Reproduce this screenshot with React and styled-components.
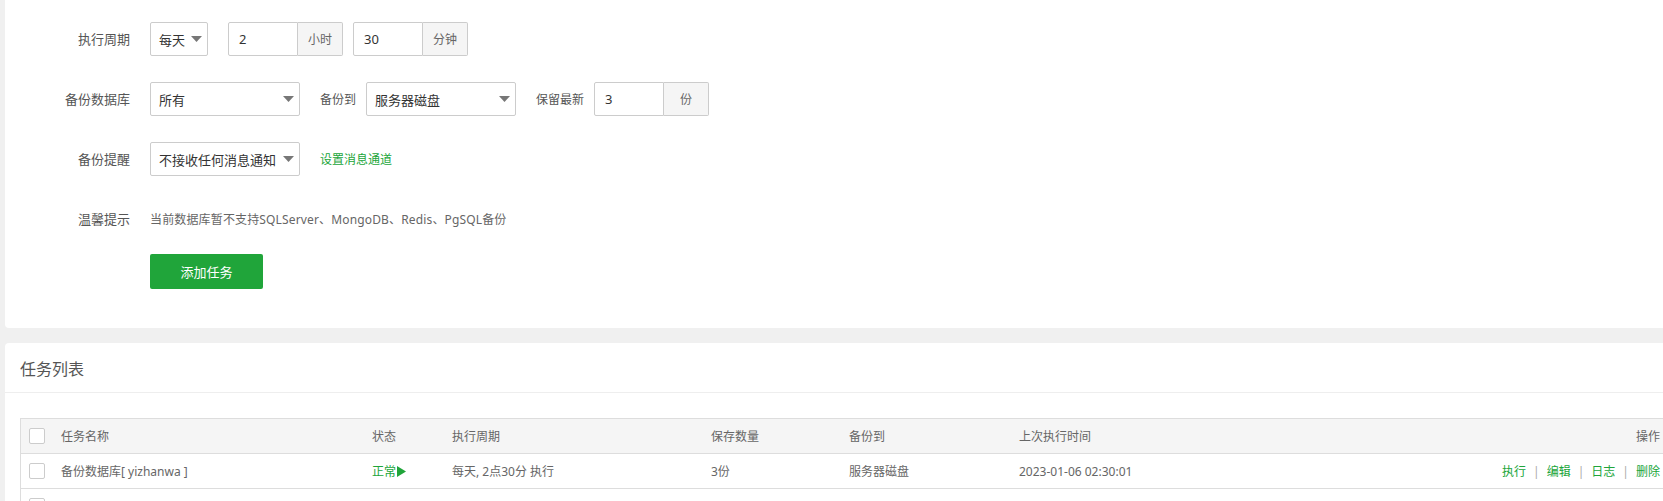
import React from "react";
import styled, { createGlobalStyle } from "styled-components";

const GlobalStyle = createGlobalStyle`
  html, body {
    margin: 0;
    padding: 0;
    overflow: hidden;
    background: #f0f0f0;
  }
  body {
    font-family: "Noto Sans", "Noto Sans CJK SC", sans-serif;
    color: #555;
  }
  * {
    box-sizing: border-box;
  }
`;

const Page = styled.div`
  width: 1700px;
  padding-left: 5px;
  display: flex;
  flex-direction: column;
  gap: 15px;
`;

const Panel = styled.div`
  background: #fff;
  border-radius: ${(p) => (p.$top ? "0 0 4px 4px" : "4px")};
`;

const Form = styled.div`
  padding: 22px 0 39px 0;
  display: flex;
  flex-direction: column;
  gap: 26px;
`;

const Line = styled.div`
  display: flex;
  align-items: center;
  height: 34px;
`;

const Label = styled.span`
  width: 145px;
  padding-right: 20px;
  text-align: right;
  font-size: 13px;
  color: #555;
  line-height: 34px;
`;

const InlineLabel = styled.span`
  margin: 0 10px 0 20px;
  font-size: 12px;
  color: #555;
`;

const Select = styled.div`
  width: ${(p) => p.$w}px;
  height: 34px;
  border: 1px solid #ccc;
  border-radius: 2px;
  display: flex;
  align-items: center;
  justify-content: space-between;
  padding: 0 5px 0 8px;
  font-size: 13px;
  color: #333;
  margin-right: ${(p) => p.$mr || 0}px;
`;

const Caret = () => (
  <svg width="11" height="6" viewBox="0 0 11 6">
    <path d="M0 0 L11 0 L5.5 6 Z" fill="#777" />
  </svg>
);

const Group = styled.div`
  display: flex;
  height: 34px;
  margin-right: 10px;
`;

const Input = styled.div`
  width: 70px;
  border: 1px solid #ccc;
  border-radius: 2px 0 0 2px;
  padding-left: 10px;
  display: flex;
  align-items: center;
  font-size: 13px;
  color: #333;
`;

const Addon = styled.div`
  width: 45px;
  border: 1px solid #ccc;
  border-left: none;
  border-radius: 0 2px 2px 0;
  background: #f5f5f5;
  display: flex;
  align-items: center;
  justify-content: center;
  font-size: 12px;
  color: #666;
`;

const Link = styled.a`
  margin-left: 20px;
  font-size: 12px;
  color: #20a53a;
  text-decoration: none;
`;

const Tip = styled.span`
  font-size: 12px;
  color: #666;
  letter-spacing: 0.15px;
`;

const ButtonLine = styled.div`
  padding-left: 145px;
  margin-top: -8px;
`;

const Button = styled.button`
  width: 113px;
  height: 35px;
  border: none;
  border-radius: 2px;
  background: #20a53a;
  color: #fff;
  font-family: inherit;
  font-size: 13px;
`;

const Title = styled.div`
  height: 50px;
  border-bottom: 1px solid #eee;
  padding-left: 15px;
  display: flex;
  align-items: center;
  font-size: 16px;
  color: #555;
`;

const Body = styled.div`
  padding: 25px 15px 0 15px;
`;

const Table = styled.div`
  width: 1651px;
  border: 1px solid #ddd;
  border-bottom: none;
`;

const Row = styled.div`
  display: grid;
  grid-template-columns: 32px 311px 80px 259px 138px 170px 400px 1fr;
  height: 35px;
  border-bottom: 1px solid #ddd;
  background: ${(p) => (p.$head ? "#f5f5f5" : "#fff")};
  font-size: 12px;
  color: #666;
`;

const Cell = styled.div`
  display: flex;
  align-items: center;
  padding-left: 8px;
  justify-content: ${(p) => (p.$right ? "flex-end" : "flex-start")};
  padding-right: ${(p) => (p.$right ? "10px" : "0")};
  color: ${(p) => p.$color || "inherit"};
  white-space: nowrap;
`;

const Check = styled.span`
  width: 16px;
  height: 16px;
  border: 1px solid #ccc;
  border-radius: 2px;
  background: #fff;
`;

const Op = styled.a`
  color: #20a53a;
  text-decoration: none;
`;

const Sep = styled.span`
  margin: 0 7px;
  color: #aaa;
`;

const Play = () => (
  <svg width="9" height="11" viewBox="0 0 9 11" style={{ marginLeft: 1 }}>
    <path d="M0 0 L9 5.5 L0 11 Z" fill="#20a53a" />
  </svg>
);

const tasks = [
  {
    name: "备份数据库[ yizhanwa ]",
    cycle: "每天, 2点30分 执行",
    keep: "3份",
    to: "服务器磁盘",
    last: "2023-01-06 02:30:01",
  },
];

export default function App() {
  return (
    <>
      <GlobalStyle />
      <Page>
        <Panel $top>
          <Form>
            <Line>
              <Label>执行周期</Label>
              <Select $w={58} $mr={20}>
                每天 <Caret />
              </Select>
              <Group>
                <Input>2</Input>
                <Addon>小时</Addon>
              </Group>
              <Group>
                <Input>30</Input>
                <Addon>分钟</Addon>
              </Group>
            </Line>
            <Line>
              <Label>备份数据库</Label>
              <Select $w={150}>
                所有 <Caret />
              </Select>
              <InlineLabel>备份到</InlineLabel>
              <Select $w={150}>
                服务器磁盘 <Caret />
              </Select>
              <InlineLabel>保留最新</InlineLabel>
              <Group>
                <Input>3</Input>
                <Addon>份</Addon>
              </Group>
            </Line>
            <Line>
              <Label>备份提醒</Label>
              <Select $w={150}>
                不接收任何消息通知 <Caret />
              </Select>
              <Link>设置消息通道</Link>
            </Line>
            <Line>
              <Label>温馨提示</Label>
              <Tip>当前数据库暂不支持SQLServer、MongoDB、Redis、PgSQL备份</Tip>
            </Line>
            <ButtonLine>
              <Button>添加任务</Button>
            </ButtonLine>
          </Form>
        </Panel>
        <Panel>
          <Title>任务列表</Title>
          <Body>
            <Table>
              <Row $head>
                <Cell>
                  <Check />
                </Cell>
                <Cell>任务名称</Cell>
                <Cell>状态</Cell>
                <Cell>执行周期</Cell>
                <Cell>保存数量</Cell>
                <Cell>备份到</Cell>
                <Cell>上次执行时间</Cell>
                <Cell $right>操作</Cell>
              </Row>
              {tasks.map((t, i) => (
                <Row key={i}>
                  <Cell>
                    <Check />
                  </Cell>
                  <Cell>{t.name}</Cell>
                  <Cell $color="#20a53a">
                    正常
                    <Play />
                  </Cell>
                  <Cell>{t.cycle}</Cell>
                  <Cell>{t.keep}</Cell>
                  <Cell>{t.to}</Cell>
                  <Cell>{t.last}</Cell>
                  <Cell $right>
                    <Op>执行</Op>
                    <Sep>|</Sep>
                    <Op>编辑</Op>
                    <Sep>|</Sep>
                    <Op>日志</Op>
                    <Sep>|</Sep>
                    <Op>删除</Op>
                  </Cell>
                </Row>
              ))}
              <Row>
                <Cell>
                  <Check />
                </Cell>
              </Row>
            </Table>
          </Body>
        </Panel>
      </Page>
    </>
  );
}
